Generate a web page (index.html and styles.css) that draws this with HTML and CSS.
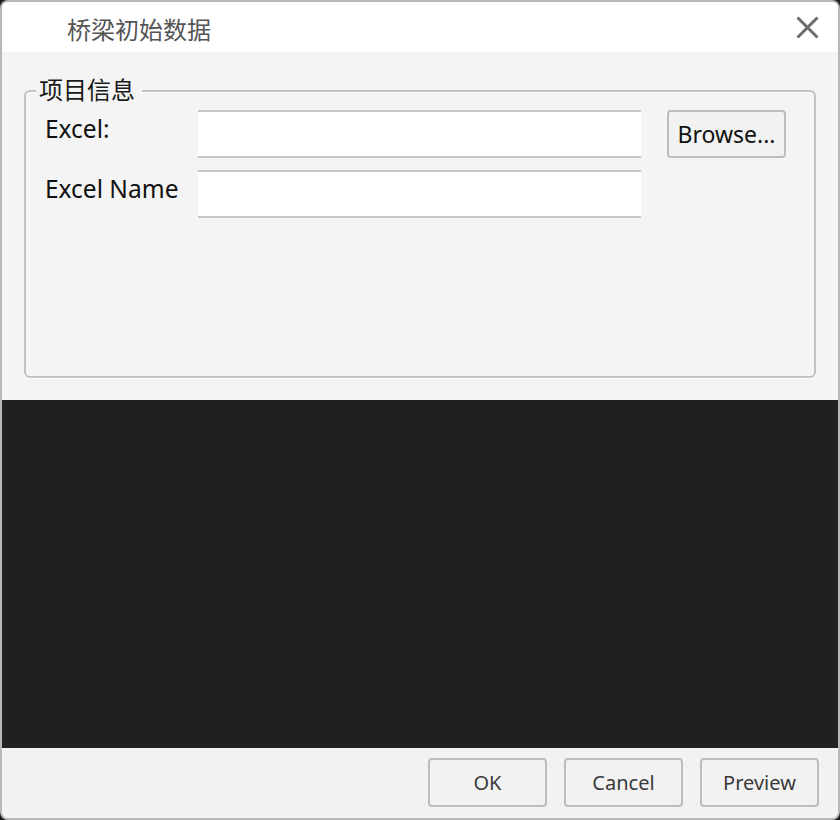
FILE: index.html
```html
<!DOCTYPE html>
<html lang="zh-CN">
<head>
<meta charset="utf-8">
<title>桥梁初始数据</title>
<link rel="stylesheet" href="styles.css">
</head>
<body>
<div class="window">
  <div class="titlebar">
    <span class="title">桥梁初始数据</span>
    <button class="close" aria-label="Close">
      <svg width="23" height="23" viewBox="0 0 23 23"><path d="M1.5 1.5 L21.5 21.5 M21.5 1.5 L1.5 21.5" stroke="#6b6b6b" stroke-width="3" fill="none"/></svg>
    </button>
  </div>
  <div class="content">
    <div class="group">
      <span class="legend">项目信息</span>
      <div class="form">
        <label class="label">Excel:</label>
        <div class="input"></div>
        <button class="btn browse">Browse...</button>
        <label class="label">Excel Name</label>
        <div class="input"></div>
        <div></div>
      </div>
    </div>
  </div>
  <div class="dark"></div>
  <div class="footer">
    <button class="btn foot">OK</button>
    <button class="btn foot">Cancel</button>
    <button class="btn foot">Preview</button>
  </div>
</div>
</body>
</html>
```
FILE: styles.css
```css
html, body {
  margin: 0;
  padding: 0;
  background: #1f1f1f;
}
body {
  font-family: "Noto Sans", "Noto Sans CJK SC", sans-serif;
}
.window {
  width: 840px;
  height: 820px;
  box-sizing: border-box;
  border: 2px solid #b8b8b8;
  border-radius: 8px;
  overflow: hidden;
  display: flex;
  flex-direction: column;
  background: #f4f4f4;
}
.titlebar {
  height: 50px;
  flex: none;
  background: #ffffff;
  display: flex;
  align-items: center;
  justify-content: space-between;
}
.title {
  padding-left: 65px;
  padding-top: 2px;
  font-size: 24px;
  color: #555555;
  font-family: "Noto Sans CJK SC", sans-serif;
}
.close {
  margin-right: 19px;
  width: 23px;
  height: 23px;
  padding: 0;
  border: 0;
  background: transparent;
  display: flex;
}
.content {
  height: 348px;
  flex: none;
  box-sizing: border-box;
  padding: 38px 22px 22px 22px;
  display: flex;
  flex-direction: column;
  background: #f4f4f4;
}
.group {
  flex: 1;
  position: relative;
  border: 2px solid #c3c3c3;
  border-radius: 6px;
  padding: 18px 17px 18px 19px;
  box-shadow: 0 1px 0 #ffffff, inset 0 1px 0 #ffffff;
}
.legend {
  position: absolute;
  top: -17px;
  left: 10px;
  padding: 0 7px 0 3px;
  line-height: 28px;
  font-size: 24px;
  color: #1a1a1a;
  background: #f4f4f4;
  font-family: "Noto Sans CJK SC", sans-serif;
}
.form {
  display: grid;
  grid-template-columns: 153px 443px 144px;
  grid-auto-rows: 48px;
  row-gap: 12px;
}
.label {
  font-size: 24.5px;
  line-height: 32px;
  padding-top: 3px;
  color: #111111;
}
.input {
  box-sizing: border-box;
  background: #ffffff;
  border-top: 2px solid #c6c6c6;
  border-bottom: 2px solid #c6c6c6;
}
.btn {
  font-family: "Noto Sans", sans-serif;
  box-sizing: border-box;
  border: 2px solid #bdbdbd;
  border-radius: 4px;
  background: #f2f2f2;
  padding: 0;
}
.browse {
  margin-left: 26px;
  width: 119px;
  height: 48px;
  font-size: 23px;
  color: #111111;
}
.dark {
  height: 348px;
  flex: none;
  background: #202020;
}
.footer {
  height: 70px;
  flex: none;
  box-sizing: border-box;
  background: #f2f2f2;
  display: flex;
  justify-content: flex-end;
  align-items: flex-start;
  gap: 17px;
  padding: 10px 19px 0 0;
}
.foot {
  width: 119px;
  height: 49px;
  font-size: 20px;
  color: #3a3a3a;
}
```
